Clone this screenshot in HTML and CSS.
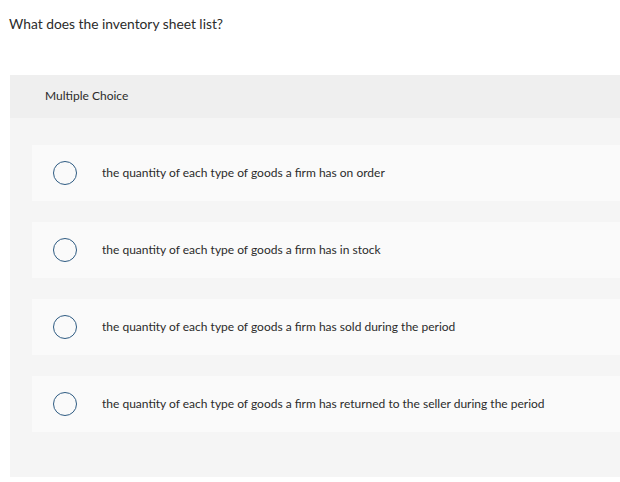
FILE: index.html
```html
<!DOCTYPE html>
<html>
<head>
<meta charset="utf-8">
<link rel="stylesheet" href="styles.css">
</head>
<body>
<p class="question">What does the inventory sheet list?</p>
<div class="card">
  <div class="card-head">Multiple Choice</div>
  <div class="options">
    <div class="option"><span class="radio"></span><span class="label">the quantity of each type of goods a firm has on order</span></div>
    <div class="option"><span class="radio"></span><span class="label">the quantity of each type of goods a firm has in stock</span></div>
    <div class="option"><span class="radio"></span><span class="label">the quantity of each type of goods a firm has sold during the period</span></div>
    <div class="option"><span class="radio"></span><span class="label">the quantity of each type of goods a firm has returned to the seller during the period</span></div>
  </div>
</div>
</body>
</html>
```
FILE: styles.css
```css
html, body {
  margin: 0;
  padding: 0;
  background: #ffffff;
  font-family: "Lato", "Open Sans", sans-serif;
  color: #2b2b2b;
  overflow: hidden;
}
.question {
  margin: 0;
  padding: 15px 0 0 9px;
  font-size: 13.8px;
  line-height: 17px;
  height: 75px;
  box-sizing: border-box;
}
.card {
  margin-left: 10px;
  background: #f5f5f5;
  height: 402px;
}
.card-head {
  background: #efefef;
  height: 43px;
  box-sizing: border-box;
  padding: 14px 0 0 35px;
  font-size: 12px;
  line-height: 14px;
}
.options {
  display: flex;
  flex-direction: column;
  gap: 21px;
  padding: 27px 0 0 22px;
}
.option {
  background: #fafafa;
  height: 56px;
  display: flex;
  align-items: center;
  padding-left: 21px;
}
.radio {
  width: 24px;
  height: 24px;
  box-sizing: border-box;
  border: 1.5px solid #2e5b82;
  border-radius: 50%;
  flex: none;
}
.label {
  margin-left: 25px;
  font-size: 12px;
  line-height: 14px;
  color: #2b2b2b;
}
```
